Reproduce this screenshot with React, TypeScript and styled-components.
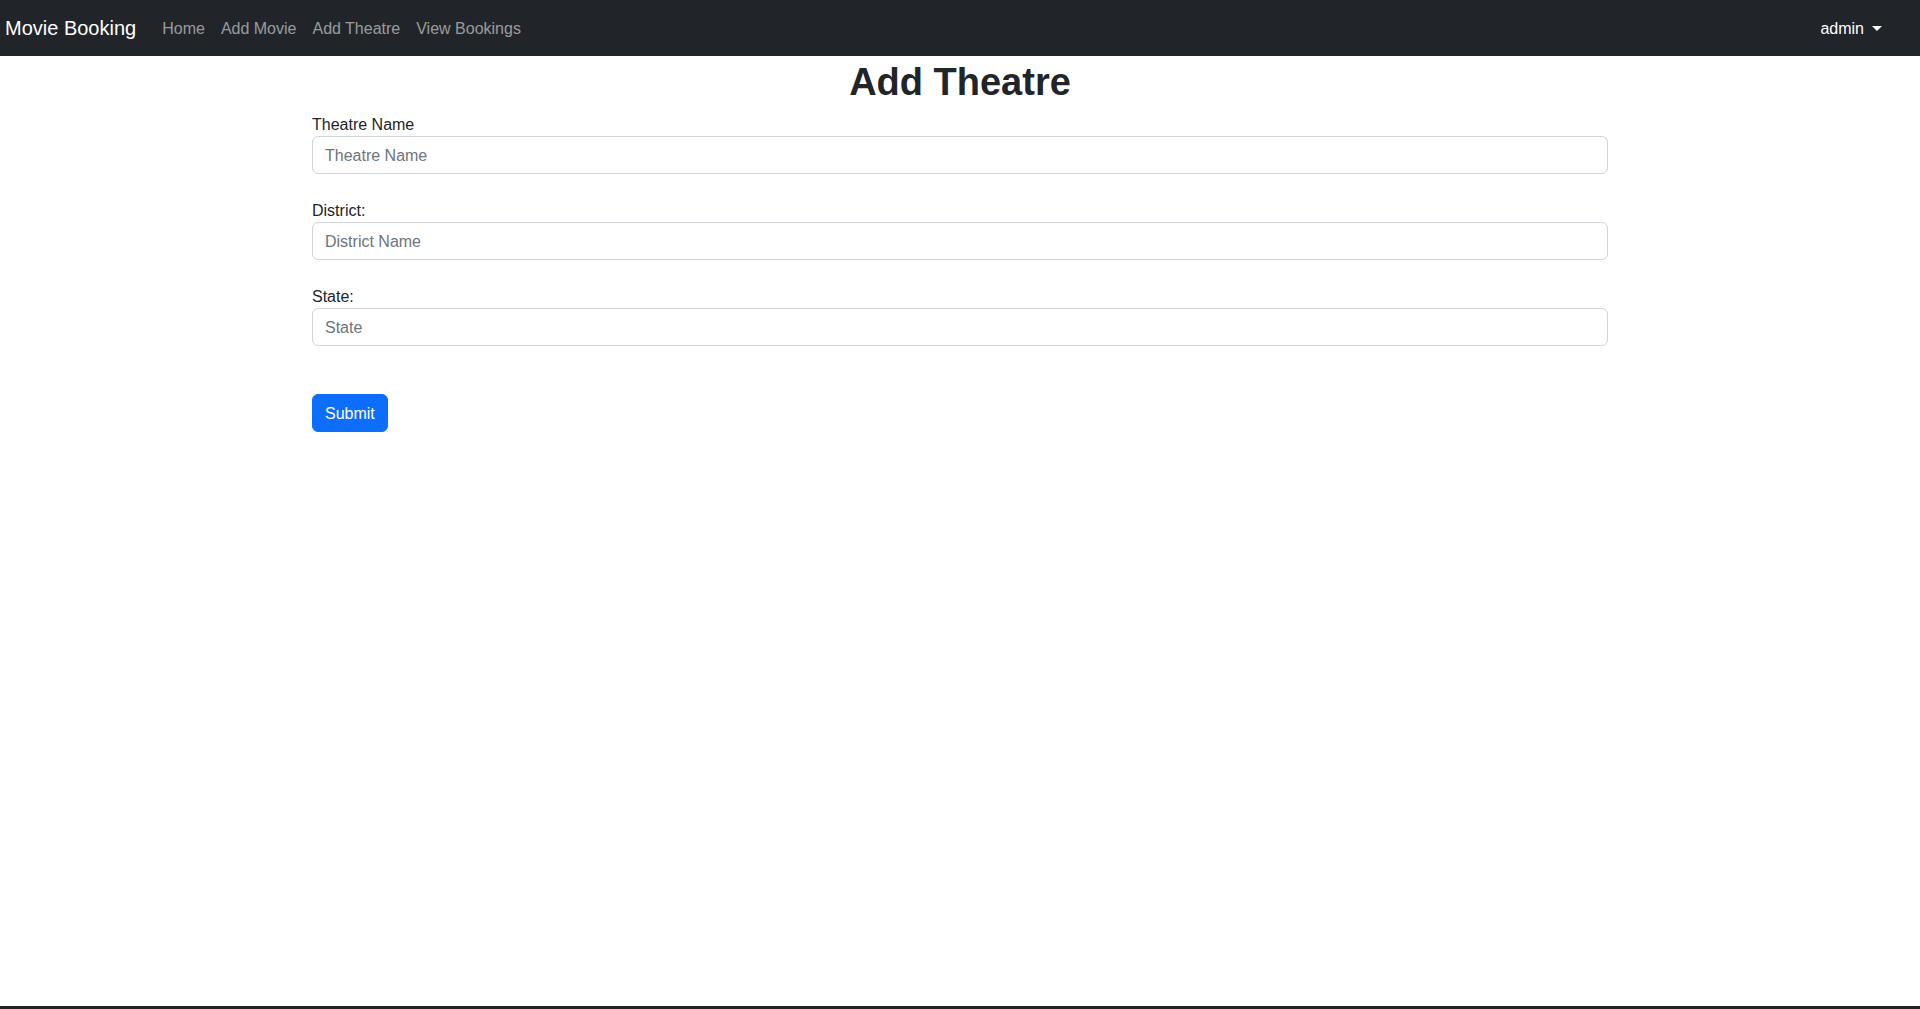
import React from "react";
import styled, { createGlobalStyle } from "styled-components";

const GlobalStyle = createGlobalStyle`
  *, *::before, *::after { box-sizing: border-box; }
  html, body { margin: 0; padding: 0; }
  body {
    font-family: "Liberation Sans", Arial, sans-serif;
    font-size: 16px;
    line-height: 1.5;
    color: #212529;
    background: #fff;
  }
`;

const Page = styled.div`
  min-height: 100vh;
  display: flex;
  flex-direction: column;
`;

const NavBar = styled.nav`
  height: 56px;
  background: #212529;
  display: flex;
  align-items: center;
  padding: 8px 30px 8px 5px;
`;

const Brand = styled.a`
  color: #fff;
  font-size: 20px;
  line-height: 30px;
  padding: 5px 0;
  margin-right: 18px;
  text-decoration: none;
`;

const NavList = styled.ul`
  list-style: none;
  margin: 0;
  padding: 0;
  display: flex;
  flex: 1;
`;

const NavLink = styled.a<{ $light?: boolean }>`
  display: block;
  padding: 9px 8px 7px;
  color: ${(p) => (p.$light ? "#fff" : "rgba(255,255,255,0.55)")};
  text-decoration: none;
  font-size: 16px;
  line-height: 24px;
`;

const Toggle = styled(NavLink)`
  display: flex;
  align-items: center;
  &::after {
    content: "";
    display: inline-block;
    margin-left: 8px;
    border-top: 5px solid #fff;
    border-left: 5px solid transparent;
    border-right: 5px solid transparent;
    transform: translateY(-1px);
  }
`;

const Main = styled.main`
  flex: 1;
  width: 100%;
  max-width: 1320px;
  margin: 0 auto;
  padding: 0 12px;
`;

const Title = styled.h1`
  margin: 0 0 6px;
  padding-top: 2px;
  text-align: center;
  font-size: 38px;
  font-weight: 700;
  line-height: 48px;
`;

const Form = styled.form`
  display: flex;
  flex-direction: column;
`;

const Field = styled.div`
  display: flex;
  flex-direction: column;
  margin-bottom: 24px;
`;

const Label = styled.label`
  font-size: 16px;
  line-height: 23px;
  padding-top: 1px;
  color: #212529;
`;

const Input = styled.input`
  display: block;
  width: 100%;
  height: 38px;
  padding: 7px 12px 5px;
  font-family: inherit;
  font-size: 16px;
  line-height: 24px;
  color: #212529;
  background: #fff;
  border: 1px solid #ced4da;
  border-radius: 6px;
  outline: none;
  &::placeholder {
    color: #6c757d;
  }
`;

const SubmitButton = styled.button`
  align-self: flex-start;
  margin-top: 24px;
  height: 38px;
  padding: 7px 12px 5px;
  font-family: inherit;
  font-size: 16px;
  line-height: 24px;
  color: #fff;
  background: #0d6efd;
  border: 1px solid #0d6efd;
  border-radius: 6px;
  cursor: pointer;
`;

const Footer = styled.footer`
  height: 3px;
  background: #212529;
`;

const fields = [
  { label: "Theatre Name", placeholder: "Theatre Name" },
  { label: "District:", placeholder: "District Name" },
  { label: "State:", placeholder: "State" },
];

export default function App() {
  return (
    <Page>
      <GlobalStyle />
      <NavBar>
        <Brand href="#">Movie Booking</Brand>
        <NavList>
          {["Home", "Add Movie", "Add Theatre", "View Bookings"].map((t) => (
            <li key={t}>
              <NavLink href="#">{t}</NavLink>
            </li>
          ))}
        </NavList>
        <Toggle href="#" $light>
          admin
        </Toggle>
      </NavBar>
      <Main>
        <Title>Add Theatre</Title>
        <Form onSubmit={(e) => e.preventDefault()}>
          {fields.map((f) => (
            <Field key={f.label}>
              <Label>{f.label}</Label>
              <Input type="text" placeholder={f.placeholder} />
            </Field>
          ))}
          <SubmitButton type="submit">Submit</SubmitButton>
        </Form>
      </Main>
      <Footer />
    </Page>
  );
}
